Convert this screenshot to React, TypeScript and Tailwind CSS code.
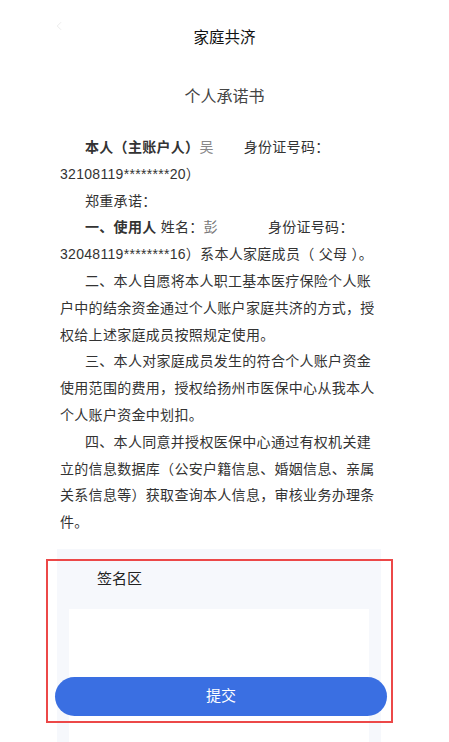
import { ChevronLeft } from 'lucide-react';

const font = 'font-["Liberation_Sans","Noto_Sans_CJK_SC",sans-serif]';

const Blank = ({ w }: { w: number }) => (
  <span className="inline-block" style={{ width: w }} />
);

const App = () => {
  return (
    <div className={`relative h-[742px] w-[449px] overflow-hidden bg-white ${font}`}>
      {/* Header */}
      <div className="relative flex h-[76px] items-center justify-center">
        <ChevronLeft size={14} strokeWidth={1.5} className="absolute left-[52px] top-[19px] text-[#e8e8e8]" />
        <h1 className="text-[15.5px] font-normal text-[#111]">家庭共济</h1>
      </div>

      <h2 className="mt-[9px] text-center text-[16px] leading-[24px] text-[#444]">个人承诺书</h2>

      {/* Commitment text */}
      <div className="mt-[25px] ml-[60px] w-[320px] text-[14px] leading-[26.8px] tracking-[0.3px] text-[#333]">
        <p className="indent-[25px]">
          <span className="font-bold">本人（主账户人）</span>
          <span className="text-[#888]">吴</span>
          <Blank w={30} />
          身份证号码：32108119********20）
        </p>
        <p className="indent-[25px]">郑重承诺：</p>
        <p className="indent-[25px]">
          <span className="font-bold">一、使用人</span> 姓名：<span className="text-[#777]">彭</span>
          <Blank w={50} />
          身份证号码：32048119********16）系本人家庭成员（ 父母 ）。
        </p>
        <p className="indent-[25px]">
          二、本人自愿将本人职工基本医疗保险个人账户中的结余资金通过个人账户家庭共济的方式，授权给上述家庭成员按照规定使用。
        </p>
        <p className="indent-[25px]">
          三、本人对家庭成员发生的符合个人账户资金使用范围的费用，授权给扬州市医保中心从我本人个人账户资金中划扣。
        </p>
        <p className="indent-[25px]">
          四、本人同意并授权医保中心通过有权机关建立的信息数据库（公安户籍信息、婚姻信息、亲属关系信息等）获取查询本人信息，审核业务办理条件。
        </p>
      </div>

      {/* Signature area */}
      <div className="mt-[13px] ml-[57px] w-[324px] bg-[#f6f8fc] px-3 pt-[19px]">
        <div className="pl-[28px] text-[15px] leading-[22px] text-[#222]">签名区</div>
        <div className="mt-[19px] h-[200px] bg-white" />
      </div>

      {/* Submit button, floats over the canvas */}
      <button className="absolute left-[55px] top-[677px] flex h-[39px] w-[332px] items-center justify-center rounded-full bg-[#3a6fe2] text-[15px] text-white">
        提交
      </button>

      {/* Red highlight frame */}
      <div className="pointer-events-none absolute left-[46px] top-[559px] h-[164px] w-[347px] border-2 border-[#ec4848]" />
    </div>
  );
};

export default App;
